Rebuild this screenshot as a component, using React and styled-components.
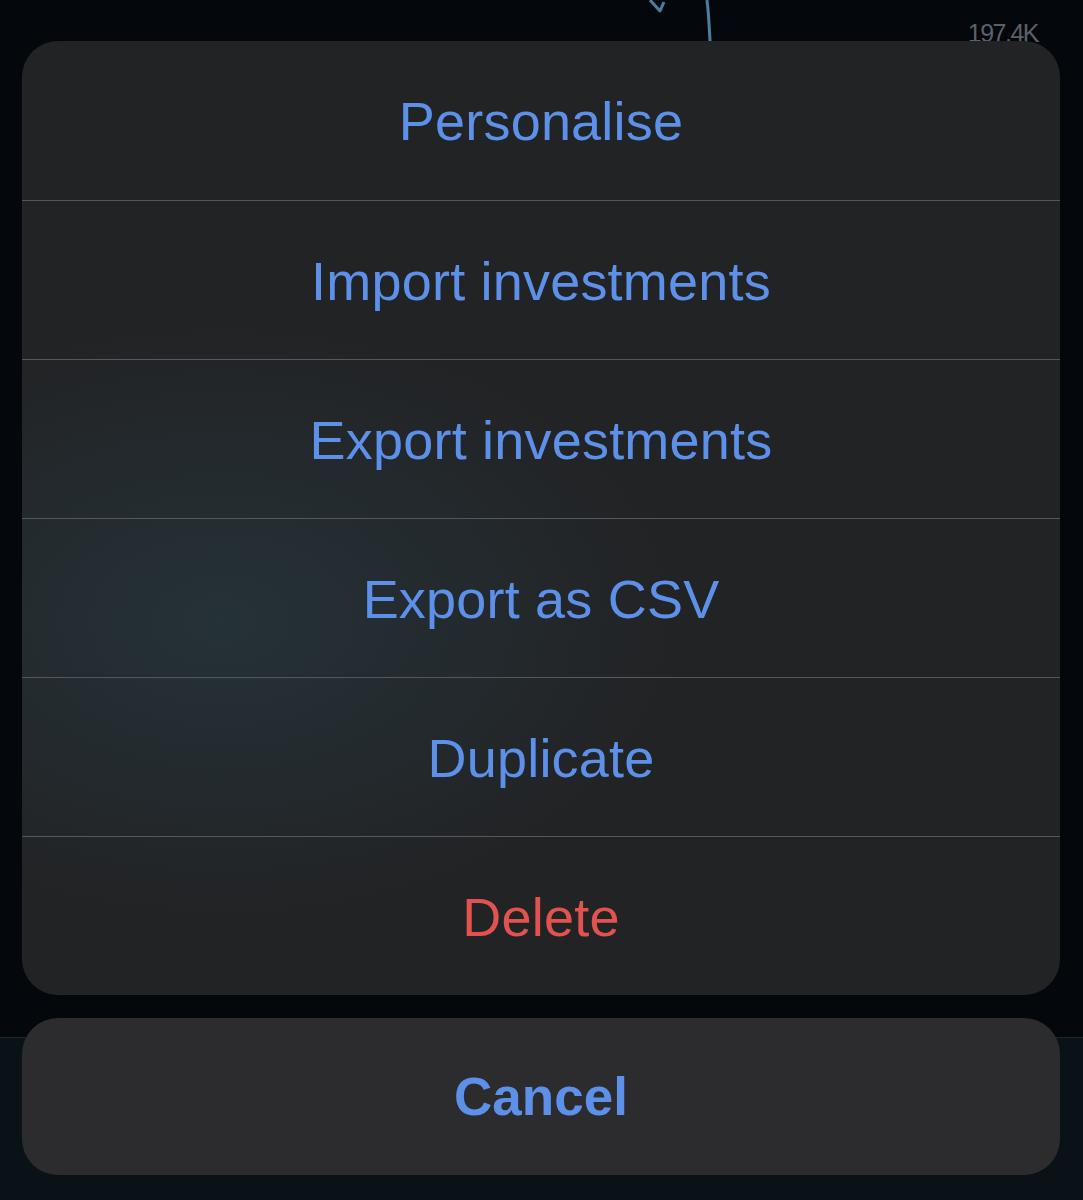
import React from 'react';
import styled, { createGlobalStyle } from 'styled-components';

const GlobalStyle = createGlobalStyle`
  html, body {
    margin: 0;
    padding: 0;
    background: #04080c;
  }
  body {
    font-family: "Liberation Sans", Arial, sans-serif;
  }
`;

const Page = styled.div`
  width: 1083px;
  height: 1200px;
  overflow: hidden;
  background: linear-gradient(to bottom, #04080c 0, #04080c 1037px, #1a2730 1037px, #1a2730 1038px, #0a1218 1038px);
  display: flex;
  flex-direction: column;
  padding: 0 23px 0 22px;
  box-sizing: border-box;
`;

const Backdrop = styled.div`
  position: relative;
  z-index: 0;
  height: 41px;
  flex-shrink: 0;
`;

const ChartLine = styled.svg`
  position: absolute;
  left: 598px;
  top: 0;
`;

const AxisLabel = styled.span`
  position: absolute;
  right: 22px;
  top: 19px;
  font-size: 25px;
  color: #5d6166;
  letter-spacing: -1.5px;
`;

const Sheet = styled.div`
  position: relative;
  z-index: 1;
  border-radius: 36px;
  overflow: hidden;
  background:
    radial-gradient(ellipse 460px 300px at 200px 580px, rgba(38, 56, 64, 0.7), rgba(38, 56, 64, 0) 100%),
    #222325;
  display: flex;
  flex-direction: column;
`;

const Action = styled.div`
  height: 159px;
  box-sizing: border-box;
  display: flex;
  align-items: center;
  justify-content: center;
  font-size: 54px;
  letter-spacing: 0.2px;
  color: ${p => (p.$danger ? '#e1534f' : '#5d90e9')};
  border-top: ${p => (p.$first ? 'none' : '1px solid #55585b')};
  padding-top: ${p => (p.$first ? '0' : '1px')};
`;

const CancelButton = styled.div`
  margin-top: 23px;
  height: 157px;
  border-radius: 36px;
  background: #2c2c2e;
  display: flex;
  align-items: center;
  justify-content: center;
  font-size: 53px;
  font-weight: 700;
  color: #5d90e9;
`;

const actions = [
  'Personalise',
  'Import investments',
  'Export investments',
  'Export as CSV',
  'Duplicate',
];

export default function App() {
  return (
    <Page>
      <GlobalStyle />
      <Backdrop>
        <ChartLine width="120" height="41" viewBox="0 0 120 41">
          <path d="M30 0 L40 11 L44 2" fill="none" stroke="#4a7f9f" strokeWidth="3" strokeLinejoin="round" />
          <path d="M87 0 C88 8 89 20 90 41" fill="none" stroke="#4a7f9f" strokeWidth="3" />
        </ChartLine>
        <AxisLabel>197.4K</AxisLabel>
      </Backdrop>
      <Sheet>
        {actions.map((a, i) => (
          <Action key={a} $first={i === 0}>{a}</Action>
        ))}
        <Action $danger>Delete</Action>
      </Sheet>
      <CancelButton>Cancel</CancelButton>
    </Page>
  );
}
